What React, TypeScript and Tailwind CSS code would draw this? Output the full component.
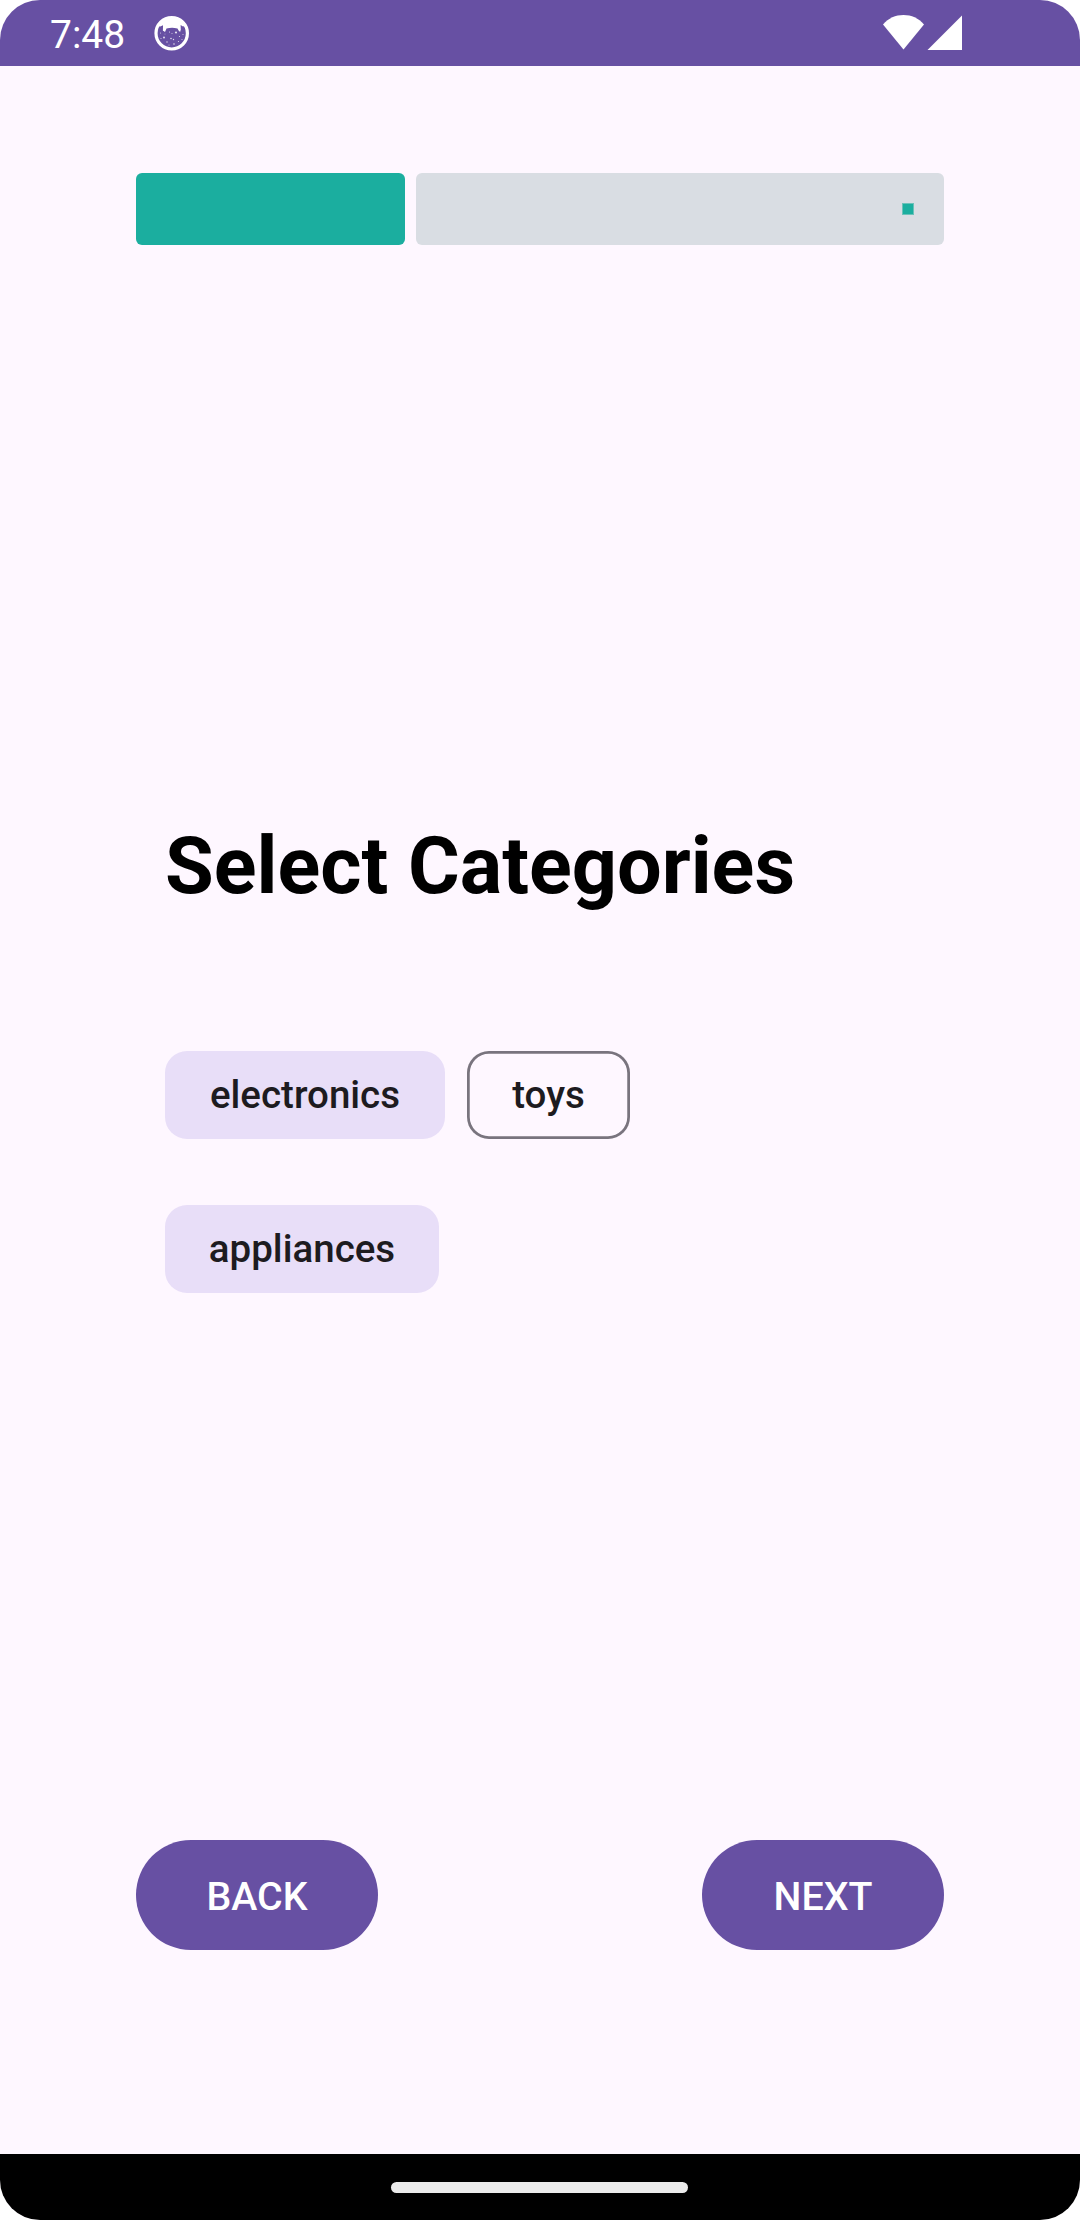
import React from 'react';

const speckles: [number, number, number][] = [
  [6.5, 17, 0.5], [9.5, 14.5, 0.6], [10, 21.5, 1], [7, 22.5, 0.5], [15.5, 16, 0.6], [17, 22.5, 0.8],
  [22, 16.5, 1.1], [26, 15, 0.6], [25.5, 20.5, 0.6], [29, 18.5, 0.5], [13, 26, 0.7], [19.5, 23.5, 0.7],
  [20, 28, 0.8], [24.5, 25.5, 0.6], [28, 23.5, 0.5], [15, 29, 0.5], [11, 18, 0.4], [18, 17.5, 0.5],
];

function CatIcon() {
  return (
    <svg className="ml-[30px] size-[36px]" viewBox="0 0 36 36">
      <circle cx="17.7" cy="17.3" r="15.7" fill="none" stroke="#fff" strokeWidth="3.2" />
      <path
        fill="#fff"
        d="M3 11.5 C6 4 11 1 17.7 1 S29.500 4 32.500 11.500 C31 9.800 30 9.700 29 10.500 L26.600 9 L26.800 14.200 L25.200 15.500 L23.500 12.500 Q17.700 10.800 12.500 12.600 L11 16 L8.900 14.500 L9 9.200 L6.400 10.500 C5 10 4.300 10.500 3 11.500 Z"
      />
      {speckles.map(([x, y, r]) => (
        <circle key={`${x}-${y}`} cx={x} cy={y} r={r} fill="#fff" fillOpacity="0.8" />
      ))}
    </svg>
  );
}

function StatusBar() {
  return (
    <header className="flex h-[66px] items-start bg-[#6750a3] pl-[50px] text-white">
      <span className="mt-[12px] w-[74px] text-[39px] leading-[46px]">7:48</span>
      <div className="mt-[16px]">
        <CatIcon />
      </div>
      <svg className="mt-[15px] mr-[117px] ml-auto h-[36px] w-[80px]" viewBox="0 0 80 36" fill="#fff">
        <path d="M0 9.500 C5.500 3 12.500 0 20.500 0 S35.500 3 41 9.500 L20.500 34.500 Z" />
        <path d="M79 0.500 V35 H44.500 Z" />
      </svg>
    </header>
  );
}

function Progress() {
  return (
    <div className="mx-[136px] mt-[107px] flex h-[72px] gap-[11px]">
      <div className="w-[269px] rounded-[6px] bg-[#1bae9f]" />
      <div className="flex flex-1 items-center justify-end rounded-[6px] bg-[#d9dde3] pr-[30px]">
        <div className="size-[12px] border border-[#6bc1b9] bg-[#1bae9f]" />
      </div>
    </div>
  );
}

function Chip({ label, size, selected = false }: { label: string; size: string; selected?: boolean }) {
  return (
    <button
      className={`flex h-[88px] items-center justify-center rounded-[22px] text-[38.5px] leading-[46px] font-medium text-[#1d1b20] ${size} ${
        selected ? 'bg-[#e8def8]' : 'shadow-[inset_0_0_0_2.75px_#79747e]'
      }`}
    >
      {label}
    </button>
  );
}

function ActionButton({ label }: { label: string }) {
  return (
    <button className="flex h-[110px] w-[242px] items-center justify-center rounded-full bg-[#6750a3] pt-[4px] text-[39.3px] leading-[46px] font-medium text-white">
      {label}
    </button>
  );
}

export default function App() {
  return (
    <div className="w-[1080px] bg-white font-['Roboto',sans-serif]">
      <div className="flex h-[2220px] flex-col overflow-hidden rounded-[40px] bg-[#fef7ff]">
        <StatusBar />
        <main className="flex flex-1 flex-col">
          <Progress />
          <h1 className="mt-[576px] ml-[165px] text-[79.2px] leading-[90px] font-bold text-black">
            Select Categories
          </h1>
          <div className="mt-[140px] ml-[165px] flex flex-col gap-[66px]">
            <div className="flex gap-[22px]">
              <Chip label="electronics" size="w-[280px]" selected />
              <Chip label="toys" size="w-[163px]" />
            </div>
            <Chip label="appliances" size="w-[274px]" selected />
          </div>
          <div className="mx-[136px] mt-auto mb-[204px] flex justify-between">
            <ActionButton label="BACK" />
            <ActionButton label="NEXT" />
          </div>
        </main>
        <footer className="flex h-[66px] justify-center bg-black pt-[27.5px] pr-px">
          <div className="h-[11px] w-[297px] rounded-full bg-[#ebebeb]" />
        </footer>
      </div>
    </div>
  );
}
